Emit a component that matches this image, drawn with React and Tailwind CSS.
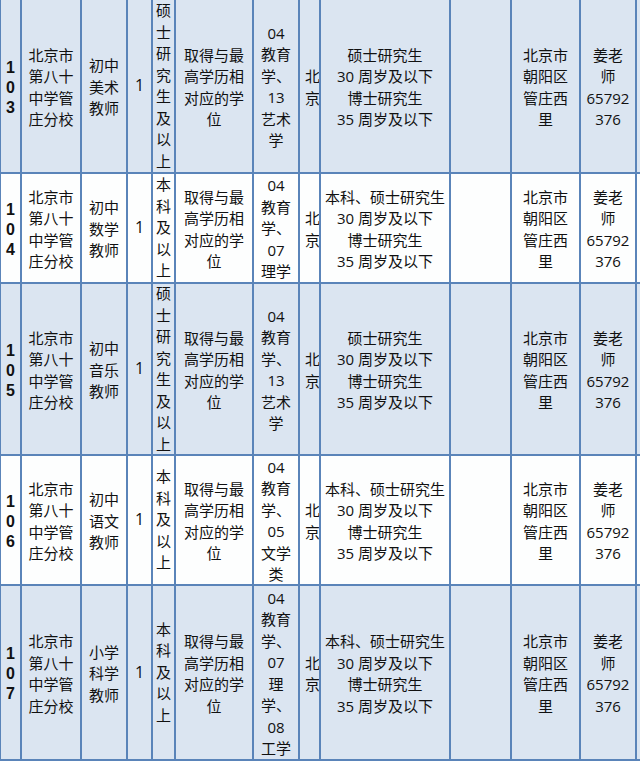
import React from "react";

const BLUE = "bg-[#dbe5f1]";
const WHITE = "bg-[#fdfefe]";

const school = ["北京市", "第八十", "中学管", "庄分校"];
const place = ["北京市", "朝阳区", "管庄西", "里"];
const contact = ["姜老", "师", "65792", "376"];
const degree = ["取得与最", "高学历相", "对应的学", "位"];
const ageMaster = ["硕士研究生", "30 周岁及以下", "博士研究生", "35 周岁及以下"];
const ageAll = ["本科、硕士研究生", "30 周岁及以下", "博士研究生", "35 周岁及以下"];

const rows = [
  {
    no: "103",
    h: "h-[174px]",
    bg: BLUE,
    job: ["初中", "美术", "教师"],
    edu: "硕士研究生及以上",
    major: ["04", "教育", "学、", "13", "艺术", "学"],
    age: ageMaster,
  },
  {
    no: "104",
    h: "h-[110px]",
    bg: WHITE,
    job: ["初中", "数学", "教师"],
    edu: "本科及以上",
    major: ["04", "教育", "学、", "07", "理学"],
    age: ageAll,
  },
  {
    no: "105",
    h: "h-[172px]",
    bg: BLUE,
    job: ["初中", "音乐", "教师"],
    edu: "硕士研究生及以上",
    major: ["04", "教育", "学、", "13", "艺术", "学"],
    age: ageMaster,
  },
  {
    no: "106",
    h: "h-[130px]",
    bg: WHITE,
    job: ["初中", "语文", "教师"],
    edu: "本科及以上",
    major: ["04", "教育", "学、", "05", "文学", "类"],
    age: ageAll,
  },
  {
    no: "107",
    h: "h-[175px]",
    bg: BLUE,
    job: ["小学", "科学", "教师"],
    edu: "本科及以上",
    major: ["04", "教育", "学、", "07", "理", "学、", "08", "工学"],
    age: ageAll,
  },
];

const cell =
  "flex flex-col items-center justify-center text-center border-r-2 border-b-2 border-[#5a84b9] overflow-hidden";

const Lines = ({ lines }) => (
  <>
    {lines.map((l, i) => (
      <div key={i} className="whitespace-nowrap">
        {l}
      </div>
    ))}
  </>
);

const Row = ({ r }) => (
  <div
    className={`grid grid-cols-[22px_60px_46px_25px_23px_78px_46px_21px_130px_61px_69px_56px_3px] ${r.h} ${r.bg}`}
  >
    {/* 岗位编号 */}
    <div className={`${cell} border-l border-l-[#5a84b9] pt-[3px] font-bold leading-[20px] text-[16px] font-['Liberation_Sans',sans-serif]`}>
      <Lines lines={r.no.split("")} />
    </div>
    <div className={`${cell} pt-[3px]`}>
      <Lines lines={school} />
    </div>
    <div className={`${cell} pt-[3px]`}>
      <Lines lines={r.job} />
    </div>
    <div className={`${cell} text-[16px]`}>1</div>
    <div className={`${cell} px-[3px]`}>
      <div className="break-all">{r.edu}</div>
    </div>
    <div className={`${cell} pt-[3px]`}>
      <Lines lines={degree} />
    </div>
    <div className={`${cell} pt-[2px]`}>
      <Lines lines={r.major} />
    </div>
    <div className={`${cell} items-start pl-[5px] pt-[3px]`}>
      <Lines lines={["北", "京"]} />
    </div>
    <div className={`${cell} pt-[3px]`}>
      <Lines lines={r.age} />
    </div>
    <div className={cell}></div>
    <div className={`${cell} pt-[3px]`}>
      <Lines lines={place} />
    </div>
    <div className={`${cell} pt-[3px]`}>
      <Lines lines={contact} />
    </div>
    <div className="border-b-2 border-[#5a84b9]"></div>
  </div>
);

export default function App() {
  return (
    <div className="w-[640px] h-[761px] overflow-hidden bg-white text-[#111111] text-[15px] leading-[21.5px] font-['Open_Sans','Noto_Sans_CJK_SC',sans-serif]">
      {rows.map((r) => (
        <Row key={r.no} r={r} />
      ))}
    </div>
  );
}
